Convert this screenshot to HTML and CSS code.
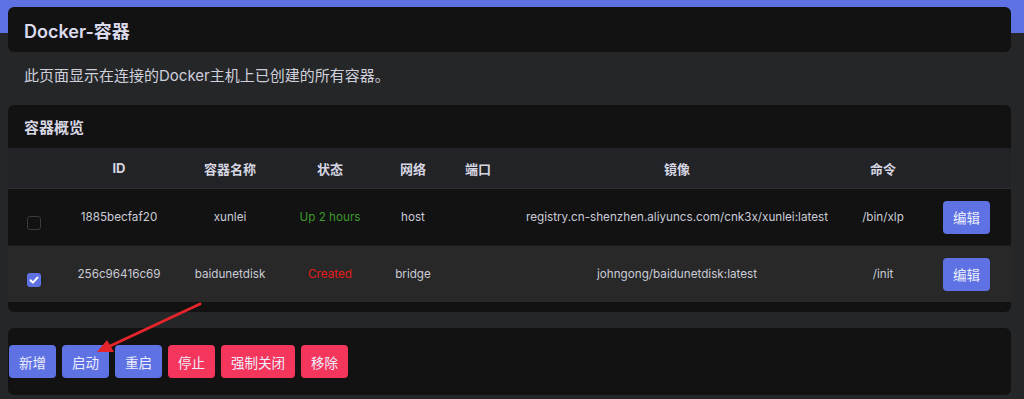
FILE: index.html
```html
<!DOCTYPE html>
<html lang="zh-CN">
<head>
    <meta charset="UTF-8">
    <meta name="viewport" content="width=device-width, initial-scale=1.0">
    <title>Docker-容器</title>
    <link rel="stylesheet" href="styles.css">
</head>
<body>
    <div class="page">
        <div class="card page-header">Docker-容器</div>
        <p class="page-desc">此页面显示在连接的Docker主机上已创建的所有容器。</p>

        <div class="card overview">
            <div class="card-title">容器概览</div>
            <table class="containers">
                <colgroup>
                    <col style="width:52px">
                    <col style="width:118px">
                    <col style="width:104px">
                    <col style="width:96px">
                    <col style="width:70px">
                    <col style="width:60px">
                    <col style="width:338px">
                    <col style="width:74px">
                    <col>
                </colgroup>
                <thead>
                    <tr>
                        <th></th>
                        <th>ID</th>
                        <th>容器名称</th>
                        <th>状态</th>
                        <th>网络</th>
                        <th>端口</th>
                        <th>镜像</th>
                        <th>命令</th>
                        <th></th>
                    </tr>
                </thead>
                <tbody>
                    <tr>
                        <td><span class="check"></span></td>
                        <td>1885becfaf20</td>
                        <td>xunlei</td>
                        <td class="status-up">Up 2 hours</td>
                        <td>host</td>
                        <td></td>
                        <td>registry.cn-shenzhen.aliyuncs.com/cnk3x/xunlei:latest</td>
                        <td>/bin/xlp</td>
                        <td><button class="btn btn-primary">编辑</button></td>
                    </tr>
                    <tr class="selected">
                        <td>
                            <span class="check checked">
                                <svg viewBox="0 0 14 14" width="14" height="14"><path d="M3.5 7.2l2.4 2.4 4.6-5" fill="none" stroke="#fff" stroke-width="2" stroke-linecap="round" stroke-linejoin="round"/></svg>
                            </span>
                        </td>
                        <td>256c96416c69</td>
                        <td>baidunetdisk</td>
                        <td class="status-created">Created</td>
                        <td>bridge</td>
                        <td></td>
                        <td>johngong/baidunetdisk:latest</td>
                        <td>/init</td>
                        <td><button class="btn btn-primary">编辑</button></td>
                    </tr>
                </tbody>
            </table>
        </div>

        <div class="card actions">
            <button class="btn btn-primary">新增</button>
            <button class="btn btn-primary">启动</button>
            <button class="btn btn-primary">重启</button>
            <button class="btn btn-danger">停止</button>
            <button class="btn btn-danger">强制关闭</button>
            <button class="btn btn-danger">移除</button>
        </div>
    </div>

    <!-- annotation arrow -->
    <svg class="pointer" width="1024" height="399" viewBox="0 0 1024 399">
        <line x1="200" y1="304" x2="108" y2="347" stroke="#e4252b" stroke-width="3" stroke-linecap="round"/>
        <polygon points="97,352 107,340 114,352" fill="#e4252b"/>
    </svg>
</body>
</html>
```

FILE: styles.css
```css
body {
    margin: 0;
    font-family: Inter, "Noto Sans CJK SC", sans-serif;
    color: #cacbd6;
    background: linear-gradient(#5e72e4 0, #5e72e4 33px, #252628 33px);
    min-height: 399px;
}

.page {
    padding: 7px 13px 0 8px;
}

.card {
    background: #121212;
    border-radius: 6px;
}

.page-header {
    height: 45px;
    padding: 0 16px;
    display: flex;
    align-items: center;
    font-size: 18px;
    font-weight: 600;
    color: #dcdbee;
}

.page-desc {
    margin: 13px 0 18px 16px;
    font-size: 15px;
    line-height: 22px;
    color: #cfd0dc;
}

.overview {
    overflow: hidden;
    padding-bottom: 10px;
}

.card-title {
    height: 43px;
    padding: 0 16px;
    display: flex;
    align-items: center;
    font-size: 15px;
    font-weight: 700;
    color: #d8d8e4;
}

.containers {
    width: 100%;
    border-collapse: collapse;
    table-layout: fixed;
    font-size: 11.7px;
}

.containers th {
    height: 40px;
    padding: 0;
    background: #222326;
    border-bottom: 1px solid #2e2f33;
    font-size: 13px;
    font-weight: 700;
    color: #d6d6e2;
    text-align: center;
}

.containers td {
    height: 56px;
    padding: 0;
    text-align: center;
    white-space: nowrap;
    border-bottom: 1px solid #1d1d1f;
}

.containers tr.selected td {
    background: #282828;
    border-bottom: 0;
}

.containers td:first-child {
    text-align: left;
    padding-left: 19px;
}

.check {
    display: inline-block;
    width: 14px;
    height: 14px;
    box-sizing: border-box;
    border: 1px solid #393a3e;
    border-radius: 3px;
    vertical-align: -14px;
}

.check.checked {
    border: 0;
    background: #5e72e4;
}

.check svg {
    display: block;
}

.status-up {
    color: #3b9a2b;
}

.status-created {
    color: #e71c1c;
}

.btn {
    height: 33px;
    padding: 0 10px;
    border: 0;
    border-radius: 4px;
    font-family: inherit;
    font-size: 13.5px;
    color: #eceefc;
    cursor: pointer;
}

.btn-primary {
    background: #5e72e4;
}

.btn-danger {
    background: #f5365c;
}

.containers .btn {
    width: 47px;
    padding: 0;
    margin-left: 2px;
}

.actions {
    margin-top: 16px;
    padding: 17px 1px;
    display: flex;
    gap: 6px;
}

.pointer {
    position: absolute;
    left: 0;
    top: 0;
    pointer-events: none;
}
```
